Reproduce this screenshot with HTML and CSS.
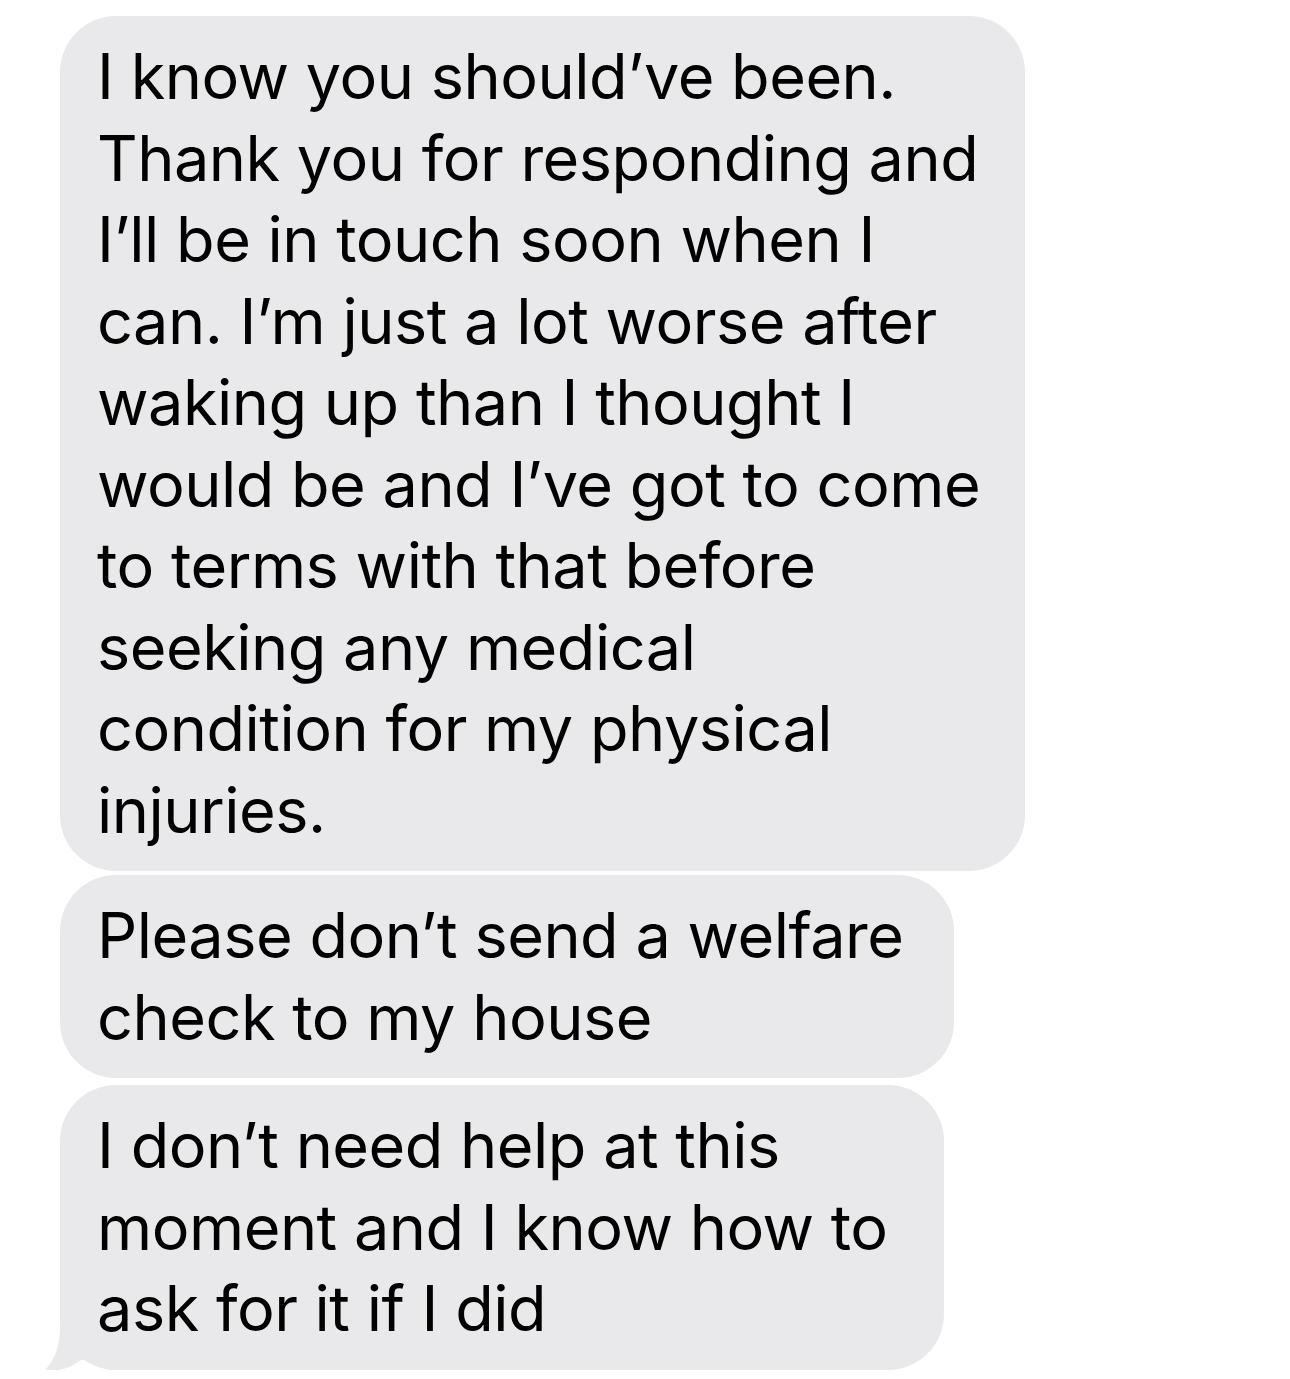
FILE: index.html
```html
<!DOCTYPE html>
<html lang="en">
<head>
  <meta charset="UTF-8">
  <meta name="viewport" content="width=device-width, initial-scale=1.0">
  <title>Messages</title>
  <link rel="stylesheet" href="styles.css">
</head>
<body>

  <div class="thread">
    <div class="bubble first">
      I know you should’ve been.<br>
      Thank you for responding and<br>
      I’ll be in touch soon when I<br>
      can. I’m just a lot worse after<br>
      waking up than I thought I<br>
      would be and I’ve got to come<br>
      to terms with that before<br>
      seeking any medical<br>
      condition for my physical<br>
      injuries.
    </div>

    <div class="bubble second">
      Please don’t send a welfare<br>
      check to my house
    </div>

    <div class="bubble last">
      I don’t need help at this<br>
      moment and I know how to<br>
      ask for it if I did
      <svg class="tail" width="50" height="62" viewBox="0 0 50 62">
        <path d="M17 0 L17 16 C17 36 12 50 2 60 C14 62 28 58 38 50 L50 50 L50 0 Z" fill="#e9e9eb"/>
      </svg>
    </div>
  </div>

</body>
</html>
```

FILE: styles.css
```css
body {
 margin: 0;
 background-color: #ffffff;
 font-family: Inter, "Noto Sans", sans-serif;
}
.thread {
 padding-top: 16px;
 padding-left: 60px;
 display: flex;
 flex-direction: column;
 align-items: flex-start;
}
.bubble {
 position: relative;
 box-sizing: border-box;
 background-color: #e9e9eb;
 color: #000;
 font-size: 63px;
 line-height: 81.5px;
 letter-spacing: -0.5px;
 white-space: nowrap;
 padding: 20px 0 20px 37px;
 border-radius: 56px;
}
.first {
 width: 965px;
 margin-bottom: 4px;
}
.second {
 width: 894px;
 margin-bottom: 7px;
}
.last {
 width: 884px;
}
.tail {
 position: absolute;
 left: -17px;
 bottom: -2px;
}
```
